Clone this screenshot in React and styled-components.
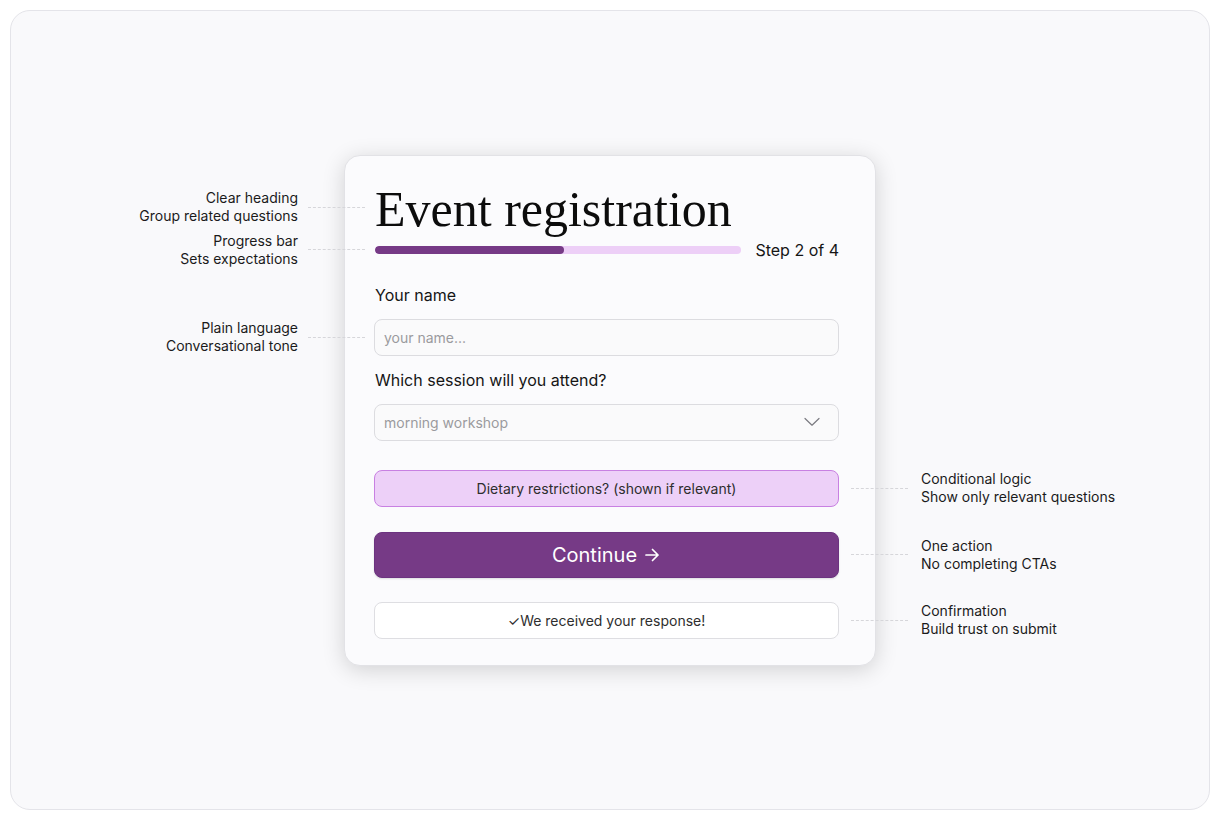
import React from 'react'
import styled, { createGlobalStyle } from 'styled-components'

const Global = createGlobalStyle`
  html, body {
    margin: 0;
    padding: 0;
    background: #ffffff;
  }
  body {
    font-family: Inter, "Liberation Sans", sans-serif;
    color: #151515;
  }
  * { box-sizing: border-box; }
`

const Page = styled.div`
  padding: 10px;
  width: 1220px;
  height: 820px;
`

const Frame = styled.div`
  width: 1200px;
  height: 800px;
  border: 1px solid #e4e4e9;
  border-radius: 20px;
  background: #f9f9fb;
  display: flex;
  align-items: center;
  justify-content: center;
`

const Card = styled.div`
  width: 532px;
  background: #fbfbfd;
  border: 1px solid #e2e2e6;
  border-radius: 16px;
  box-shadow: 0 4px 22px rgba(0, 0, 0, 0.16);
  padding: 29px 36px 26px 29px;
  display: flex;
  flex-direction: column;
`

const Anchor = styled.div`
  position: relative;
  margin-top: ${p => p.mt || 0}px;
`

const Callout = styled.div`
  position: absolute;
  top: 50%;
  transform: translateY(calc(-50% + ${p => p.dy || 0}px));
  display: flex;
  align-items: center;
  flex-direction: ${p => (p.side === 'left' ? 'row' : 'row-reverse')};
  gap: ${p => (p.side === 'left' ? '10px' : '13px')};
  white-space: nowrap;
  ${p => (p.side === 'left' ? 'right: calc(100% + 9px);' : 'left: calc(100% + 12px);')}
`

const CalloutText = styled.div`
  font-size: 14px;
  line-height: 18px;
  color: #1b1b1b;
  text-align: ${p => (p.side === 'left' ? 'right' : 'left')};
`

const Leader = styled.div`
  width: 57px;
  border-top: 1px dashed #d6d6da;
`

const Heading = styled.h1`
  margin: -3px 0 3px 1px;
  font-family: "Liberation Serif", "DejaVu Serif", serif;
  font-weight: 400;
  font-size: 50px;
  line-height: 55px;
  color: #0c0c0c;
`

const ProgressRow = styled.div`
  height: 20px;
  display: flex;
  align-items: center;
  gap: 14px;
  padding-left: 1px;
`

const Track = styled.div`
  flex: 1;
  height: 8px;
  border-radius: 4px;
  background: #edcff7;
  overflow: hidden;
`

const Fill = styled.div`
  height: 100%;
  border-radius: 4px;
  background: #763a86;
`

const StepText = styled.span`
  font-size: 16px;
  color: #151515;
`

const Label = styled.div`
  font-size: 16px;
  line-height: 20px;
  color: #151515;
  padding-left: 1px;
  margin-top: ${p => p.mt || 0}px;
`

const Field = styled.div`
  height: 37px;
  border: 1px solid #dcdce0;
  border-radius: 8px;
  background: #fafafb;
  display: flex;
  align-items: center;
  justify-content: space-between;
  padding: 0 18px 0 9px;
  font-size: 14px;
  color: #9a9a9e;
  margin-top: ${p => p.mt || 0}px;
`

const Notice = styled.div`
  height: 37px;
  border-radius: 8px;
  border: 1px solid ${p => (p.tone === 'accent' ? '#c880e2' : '#dedee2')};
  background: ${p => (p.tone === 'accent' ? '#edd0f8' : '#ffffff')};
  display: flex;
  align-items: center;
  justify-content: center;
  font-size: 14px;
  color: #2e2e2e;
`

const Button = styled.button`
  width: 100%;
  height: 46px;
  border: 1px solid #6c3380;
  border-radius: 8px;
  background: #763a86;
  color: #ffffff;
  font-family: Inter, "Liberation Sans", sans-serif;
  font-size: 20px;
  display: flex;
  align-items: center;
  justify-content: center;
  gap: 6px;
  box-shadow: 0 1px 2px rgba(0, 0, 0, 0.12);
  cursor: pointer;
`

const Note = ({ side, lines, dy }) => (
  <Callout side={side} dy={dy}>
    <CalloutText side={side}>
      {lines.map(l => <div key={l}>{l}</div>)}
    </CalloutText>
    <Leader />
  </Callout>
)

const Chevron = () => (
  <svg width="16" height="10" viewBox="0 0 16 10" fill="none">
    <path d="M1 1.5 L8 8.2 L15 1.5" stroke="#7a7a80" strokeWidth="1.2" strokeLinecap="round" strokeLinejoin="round" />
  </svg>
)

const Arrow = () => (
  <svg width="18" height="18" viewBox="0 0 18 18" fill="none">
    <path d="M3 9 H15 M9.5 3.5 L15 9 L9.5 14.5" stroke="#ffffff" strokeWidth="1.7" strokeLinecap="round" strokeLinejoin="round" />
  </svg>
)

export default function App() {
  const step = 2
  const total = 4
  return (
    <Page>
      <Global />
      <Frame>
        <Card>
          <Anchor>
            <Heading>Event registration</Heading>
            <Note side="left" dy={-5} lines={['Clear heading', 'Group related questions']} />
          </Anchor>
          <Anchor>
            <ProgressRow>
              <Track>
                <Fill style={{ width: `${(step / total) * 103}%` }} />
              </Track>
              <StepText>Step {step} of {total}</StepText>
            </ProgressRow>
            <Note side="left" lines={['Progress bar', 'Sets expectations']} />
          </Anchor>

          <Label mt={25}>Your name</Label>
          <Anchor mt={14}>
            <Field>your name...</Field>
            <Note side="left" lines={['Plain language', 'Conversational tone']} />
          </Anchor>

          <Label mt={14}>Which session will you attend?</Label>
          <Field mt={14}>
            <span>morning workshop</span>
            <Chevron />
          </Field>

          <Anchor mt={29}>
            <Notice tone="accent">Dietary restrictions? (shown if relevant)</Notice>
            <Note side="right" lines={['Conditional logic', 'Show only relevant questions']} />
          </Anchor>

          <Anchor mt={25}>
            <Button>Continue <Arrow /></Button>
            <Note side="right" lines={['One action', 'No completing CTAs']} />
          </Anchor>

          <Anchor mt={24}>
            <Notice>✓We received your response!</Notice>
            <Note side="right" lines={['Confirmation', 'Build trust on submit']} />
          </Anchor>
        </Card>
      </Frame>
    </Page>
  )
}
